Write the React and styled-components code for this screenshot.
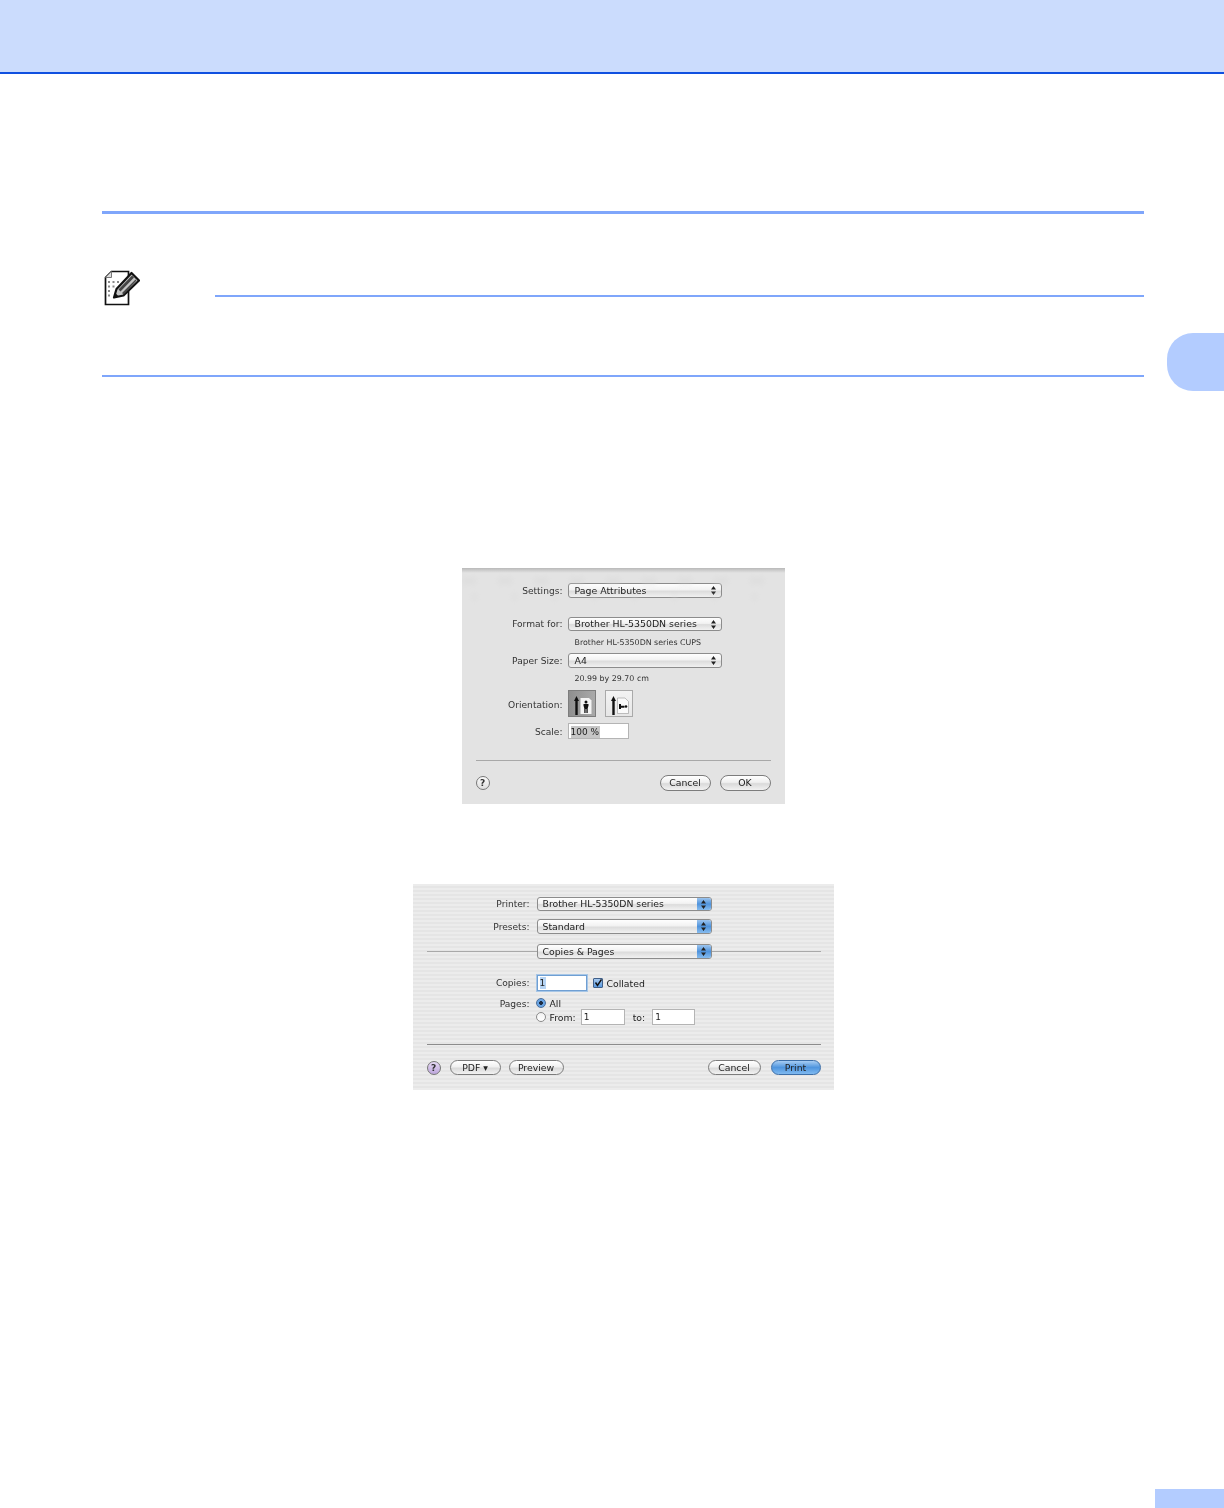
import styled, { createGlobalStyle } from 'styled-components'

const GlobalStyle = createGlobalStyle`
  html, body {
    margin: 0;
    padding: 0;
    background: #fff;
    overflow: hidden;
  }
  * {
    box-sizing: border-box;
  }
`

const Page = styled.div`
  position: relative;
  width: 1224px;
  height: 1508px;
  overflow: hidden;
  font-family: "DejaVu Sans", "Liberation Sans", sans-serif;
`

const Header = styled.header`
  height: 74px;
  background: #cbdcfd;
  border-bottom: 2px solid #0f50e0;
`

const Main = styled.main`
  padding: 137px 80px 0 102px;
`

const SectionRule = styled.div`
  height: 3px;
  background: #7fa6fb;
`

const Note = styled.section`
  margin-top: 56px;
  height: 107px;
  border-bottom: 2px solid #7fa6fb;
  display: flex;
  align-items: flex-start;
`

const NoteIcon = styled.svg`
  width: 36px;
  height: 36px;
  flex: none;
  margin-left: 2px;
`

const NoteRule = styled.div`
  flex: 1;
  height: 2px;
  margin: 25px 0 0 75px;
  background: #7fa6fb;
`

const ChapterTab = styled.div`
  position: absolute;
  top: 333px;
  right: 0;
  width: 57px;
  height: 58px;
  background: #b3ccff;
  border-radius: 26px 0 0 26px;
`

const PageTab = styled.div`
  position: absolute;
  bottom: 0;
  right: 0;
  width: 69px;
  height: 19px;
  background: #b3ccff;
`

const Figures = styled.div`
  display: flex;
  flex-direction: column;
  align-items: center;
`

const PageSetup = styled.div`
  position: relative;
  overflow: hidden;
  width: 323px;
  height: 236px;
  margin-top: 191px;
  padding: 15px 14px 0;
  background: #e3e3e3;
  filter: blur(0.45px);

  &::before {
    content: "";
    position: absolute;
    left: 0;
    right: 0;
    top: 0;
    height: 5px;
    background: linear-gradient(#b9b9b9, #e3e3e3);
  }
`

const GhostToolbar = styled.div`
  position: absolute;
  left: 0;
  right: 0;
  top: 9px;
  height: 28px;
  opacity: 0.3;
  filter: blur(2px);
  background:
    repeating-linear-gradient(90deg, #d6d6d6 0 14px, transparent 14px 36px) 0 0 / 100% 8px no-repeat,
    repeating-linear-gradient(90deg, #d8d8d8 0 5px, transparent 5px 40px) 10px 16px / 100% 8px no-repeat;
`

const PrintDialog = styled.div`
  width: 421px;
  height: 206px;
  margin-top: 80px;
  padding: 13px 13px 0 14px;
  background: repeating-linear-gradient(#ececec 0 2px, #e5e5e5 2px 4px);
  filter: blur(0.5px);
`

const FormRow = styled.div`
  display: grid;
  grid-template-columns: ${p => p.$label}px 1fr;
  column-gap: ${p => p.$gap}px;
  align-items: ${p => (p.$top ? 'start' : 'center')};
  margin-top: ${p => p.$mt || 0}px;
  background: ${p => (p.$divider ? 'linear-gradient(#a9a9a9, #a9a9a9) center / 100% 1px no-repeat' : 'none')};
`

const Label = styled.label`
  text-align: right;
  font-size: 9.1px;
  line-height: 14px;
  padding-top: ${p => p.$drop || 0}px;
  color: #333;
  white-space: nowrap;
`

const SelectBox = styled.div`
  display: flex;
  align-items: center;
  justify-content: space-between;
  width: ${p => p.$w}px;
  height: ${p => p.$h || 15}px;
  padding-left: ${p => (p.$blue ? 5 : 6)}px;
  border: 1px solid #8c8c8c;
  border-radius: 3px;
  overflow: hidden;
  background: linear-gradient(#fefefe, #f2f2f2 45%, #dcdcdc 55%, #f1f1f1);
  font-size: ${p => (p.$blue ? 9.3 : 9.4)}px;
  color: #222;
  white-space: nowrap;
`

const SelectText = styled.span`
  margin-top: ${p => (p.$raise ? -2 : 0)}px;
`

const Stepper = styled.span`
  flex: none;
  display: flex;
  align-items: center;
  justify-content: center;
  width: ${p => (p.$blue ? 14 : 15)}px;
  align-self: stretch;
  background: ${p => (p.$blue ? 'linear-gradient(#9cc4ee, #4f93dc 50%, #86bcef)' : 'transparent')};
`

const Arrows = () => (
  <svg width="5" height="9" viewBox="0 0 5 9">
    <path d="M2.5 0 5 3.4H0zM2.5 9 0 5.6h5z" fill="#222" />
  </svg>
)

const Select = ({ w, h, blue, children }) => (
  <SelectBox $w={w} $h={h} $blue={blue}>
    <SelectText $raise={h === 14}>{children}</SelectText>
    <Stepper $blue={blue}><Arrows /></Stepper>
  </SelectBox>
)

const Hint = styled.div`
  font-size: 7.9px;
  line-height: 12px;
  color: #333;
  padding-left: 7px;
  white-space: nowrap;
  grid-column: 2;
`

const Toggles = styled.div`
  display: flex;
  gap: 9px;
`

const Toggle = styled.div`
  display: flex;
  align-items: center;
  justify-content: center;
  width: 28px;
  height: 27px;
  border: 1px solid ${p => (p.$on ? '#7d7d7d' : '#a9a9a9')};
  background: ${p => (p.$on ? 'linear-gradient(90deg, #8f8f8f, #a9a9a9)' : 'linear-gradient(#f3f3f3, #e6e6e6)')};
`

const Field = styled.div`
  width: ${p => p.$w}px;
  height: 16px;
  margin-left: ${p => p.$ml || 0}px;
  padding: ${p => p.$drop || 1}px 2px 0;
  background: #fff;
  border: 1px solid ${p => (p.$focus ? '#6f9fd3' : '#b4b4b4')};
  box-shadow: ${p => (p.$focus ? '0 0 0 1px #a7c6e6' : 'none')};
  font-size: 9px;
  line-height: 12px;
  color: #222;
`

const Selected = styled.span`
  display: inline-block;
  background: ${p => p.$tint};
  padding-right: 1px;
`

const Rule = styled.hr`
  margin: ${p => p.$mt}px 0 0;
  border: 0;
  height: 1px;
  background: ${p => p.$tone};
`

const Footer = styled.div`
  display: flex;
  align-items: center;
  gap: ${p => p.$gap || 9}px;
  margin-top: ${p => p.$mt}px;
`

const HelpButton = styled.div`
  width: 14px;
  height: 14px;
  flex: none;
  margin-right: ${p => p.$mr || 0}px;
  border-radius: 50%;
  border: 1px solid #777;
  background: ${p => (p.$purple ? 'linear-gradient(#e6d9f4, #bda6dc)' : 'linear-gradient(#fbfbfb, #dedede)')};
  text-align: center;
  font-size: 9px;
  font-weight: bold;
  line-height: 12px;
  color: #333;
`

const Spacer = styled.div`
  flex: 1;
`

const Pill = styled.div`
  width: ${p => p.$w}px;
  height: ${p => p.$h}px;
  margin-left: ${p => p.$ml || 0}px;
  border-radius: 8px;
  border: 1px solid ${p => (p.$primary ? '#3d6fa8' : '#7c7c7c')};
  background: ${p => (p.$primary
    ? 'linear-gradient(#a7cdf3, #4f95de 50%, #7fb9f0)'
    : 'linear-gradient(#fff, #f0f0f0 45%, #dadada 55%, #f2f2f2)')};
  text-align: center;
  font-size: 9.3px;
  line-height: ${p => p.$h - 2}px;
  color: #222;
  white-space: nowrap;
`

const FieldLine = styled.div`
  display: flex;
  align-items: center;
  gap: 4px;
  height: ${p => p.$h}px;
  margin-top: ${p => p.$mt || 0}px;
  font-size: 9.3px;
  color: #222;
  white-space: nowrap;
`

const Check = styled.span`
  display: flex;
  width: 10px;
  height: 10px;
  flex: none;
  margin-left: 2px;
  border: 1px solid #3f5f8a;
  border-radius: 1px;
  background: linear-gradient(#a5c8ee, #5b9be0);
`

const Radio = styled.span`
  width: 10px;
  height: 10px;
  flex: none;
  margin-left: -1px;
  border-radius: 50%;
  border: 1px solid ${p => (p.$on ? '#4b6f9c' : '#8a8a8a')};
  background: ${p => (p.$on
    ? 'radial-gradient(circle, #1c2c44 0 1.6px, #6aa5e4 2.2px)'
    : 'linear-gradient(#f2f2f2, #fff)')};
`

const ToLabel = styled.span`
  margin: 0 3px 0 4px;
`

const NoteGlyph = () => (
  <NoteIcon viewBox="0 0 36 36">
    <path d="M7.500 1.500H24.500V34.500H1.500V7.500Z" fill="#fff" stroke="#111" strokeWidth="1.700" />
    <path d="M7.500 1.500V7.500H1.500" fill="#ddd" stroke="#777" strokeWidth="1" />
    <path d="M5 11v2M5 15.500v2M5 20v2M5 24.500v2M9.500 11v2M9.500 15.500v2M14 11v2" stroke="#888" strokeWidth="2" />
    <path d="M10 27.500 12.500 19 27.500 3 35 10.500 19.500 25.500Z" fill="#c4c4c4" stroke="#111" strokeWidth="2.200" strokeLinejoin="round" />
    <path d="M14.500 19.500 28 5.500l2 2L16.500 21.500ZM18 23 31.500 9.500l1 1L19.500 24.500Z" fill="#444" />
    <path d="M10 27.500 11.300 23 14.500 26.200Z" fill="#111" />
  </NoteIcon>
)

const OrientArrow = () => <path d="M5.500 3 8 8H6.700V22H4.300V8H3Z" fill="#111" />

const PortraitIcon = () => (
  <svg width="22" height="22" viewBox="0 0 22 22">
    <OrientArrow />
    <path d="M9.500 5H18L20.500 7.500V21H9.500Z" fill="#f4f4f4" />
    <circle cx="15" cy="9" r="1.500" fill="#111" />
    <path d="M12.500 11h5v1.500l-.8 3V20h-1.300v-4h-.800v4h-1.300v-4.500l-.8-3Z" fill="#111" />
  </svg>
)

const LandscapeIcon = () => (
  <svg width="22" height="22" viewBox="0 0 22 22">
    <OrientArrow />
    <path d="M9.500 5H17L20.500 8.500V20.500H9.500Z" fill="#fafafa" stroke="#999" strokeWidth="0.600" />
    <circle cx="18" cy="13.500" r="1.300" fill="#111" />
    <path d="M11 11h2v1.700h3.500v2H13V16h-2Z" fill="#111" />
  </svg>
)

const CheckMark = () => (
  <svg width="8" height="8" viewBox="0 0 8 8">
    <path d="M1.500 3.500 3.500 6.500 7.500 0.500" fill="none" stroke="#111" strokeWidth="1.500" />
  </svg>
)

const App = () => (
  <>
    <GlobalStyle />
    <Page>
      <Header />
      <ChapterTab />
      <Main>
        <SectionRule />
        <Note>
          <NoteGlyph />
          <NoteRule />
        </Note>
        <Figures>
          <PageSetup>
            <GhostToolbar />
            <FormRow $label={87} $gap={5}>
              <Label>Settings:</Label>
              <Select w={154}>Page Attributes</Select>
            </FormRow>
            <FormRow $label={87} $gap={5} $mt={19}>
              <Label>Format for:</Label>
              <Select w={154} h={14}>Brother HL-5350DN series</Select>
            </FormRow>
            <FormRow $label={87} $gap={5} $mt={6}>
              <Hint>Brother HL-5350DN series CUPS</Hint>
            </FormRow>
            <FormRow $label={87} $gap={5} $mt={4}>
              <Label>Paper Size:</Label>
              <Select w={154}>A4</Select>
            </FormRow>
            <FormRow $label={87} $gap={5} $mt={5}>
              <Hint>20.99 by 29.70 cm</Hint>
            </FormRow>
            <FormRow $label={87} $gap={5} $mt={5}>
              <Label $drop={2}>Orientation:</Label>
              <Toggles>
                <Toggle $on><PortraitIcon /></Toggle>
                <Toggle><LandscapeIcon /></Toggle>
              </Toggles>
            </FormRow>
            <FormRow $label={87} $gap={5} $mt={6}>
              <Label $drop={2}>Scale:</Label>
              <Field $w={61} $drop={2}><Selected $tint="#c6c6c6">100 %</Selected></Field>
            </FormRow>
            <Rule $mt={21} $tone="#a8a8a8" />
            <Footer $mt={14}>
              <HelpButton>?</HelpButton>
              <Spacer />
              <Pill $w={51} $h={16}>Cancel</Pill>
              <Pill $w={51} $h={16}>OK</Pill>
            </Footer>
          </PageSetup>
          <PrintDialog>
            <FormRow $label={103} $gap={7}>
              <Label>Printer:</Label>
              <Select w={175} h={14} blue>Brother HL-5350DN series</Select>
            </FormRow>
            <FormRow $label={103} $gap={7} $mt={8}>
              <Label>Presets:</Label>
              <Select w={175} blue>Standard</Select>
            </FormRow>
            <FormRow $label={103} $gap={7} $mt={10} $divider>
              <span />
              <Select w={175} blue>Copies &amp; Pages</Select>
            </FormRow>
            <FormRow $label={103} $gap={7} $mt={16}>
              <Label>Copies:</Label>
              <FieldLine $h={16}>
                <Field $w={50} $focus><Selected $tint="#b6d4f4">1</Selected></Field>
                <Check><CheckMark /></Check>
                <span>Collated</span>
              </FieldLine>
            </FormRow>
            <FormRow $label={103} $gap={7} $mt={5} $top>
              <Label $drop={1}>Pages:</Label>
              <div>
                <FieldLine $h={14}><Radio $on /><span>All</span></FieldLine>
                <FieldLine $h={16} $mt={-1}>
                  <Radio /><span>From:</span>
                  <Field $w={44} $ml={1}>1</Field>
                  <ToLabel>to:</ToLabel>
                  <Field $w={43}>1</Field>
                </FieldLine>
              </div>
            </FormRow>
            <Rule $mt={19} $tone="#8c8c8c" />
            <Footer $mt={15} $gap={8}>
              <HelpButton $purple $mr={1}>?</HelpButton>
              <Pill $w={51} $h={15}>PDF ▾</Pill>
              <Pill $w={55} $h={15}>Preview</Pill>
              <Spacer />
              <Pill $w={53} $h={15}>Cancel</Pill>
              <Pill $w={50} $h={15} $ml={2} $primary>Print</Pill>
            </Footer>
          </PrintDialog>
        </Figures>
      </Main>
      <PageTab />
    </Page>
  </>
)

export default App
